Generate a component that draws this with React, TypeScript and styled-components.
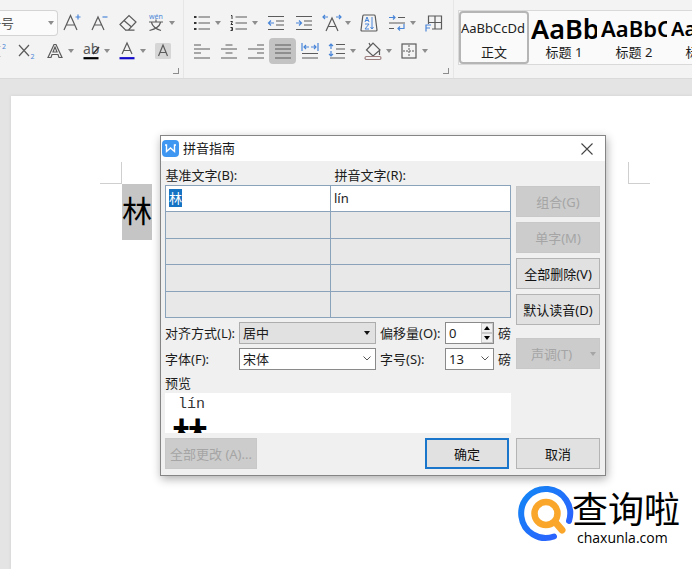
import React from "react";
import styled, { createGlobalStyle, css } from "styled-components";

const GlobalStyle = createGlobalStyle`
  * { box-sizing: border-box; }
  html, body { margin: 0; height: 100%; }
  body {
    font-family: "Noto Sans", "Noto Sans CJK SC", sans-serif;
    font-size: 13px;
    color: #1c1c1c;
    background: #e4e4e4;
    overflow: hidden;
  }
  button, input, select { font: inherit; color: inherit; margin: 0; }
`;

const Screen = styled.div`
  position: relative;
  display: flex;
  flex-direction: column;
  min-height: 100vh;
  overflow: hidden;
`;

/* ---------- ribbon ---------- */

const Ribbon = styled.header`
  display: flex;
  height: 79px;
  background: #f3f3f3;
  border-bottom: 1px solid #dadada;
  flex: none;
`;

const Group = styled.div<{ $inset?: number }>`
  position: relative;
  flex: none;
  display: flex;
  flex-direction: column;
  padding: 9px 5px 0 ${(p) => p.$inset ?? 0}px;
  border-right: 1px solid #e6e6e6;
`;

const ToolRow = styled.div<{ $pitch: number; $split: number; $shift?: number }>`
  display: flex;
  align-items: center;
  height: 28px;
  margin-left: ${(p) => p.$shift ?? 0}px;
  & > button { width: ${(p) => p.$pitch}px; }
  & > button[aria-haspopup] { width: ${(p) => p.$split}px; }
`;

const ToolButton = styled.button<{ $active?: boolean }>`
  flex: none;
  display: flex;
  align-items: center;
  gap: 3px;
  height: 26px;
  padding: 0 0 0 4px;
  border: 0;
  border-radius: 4px;
  background: ${(p) => (p.$active ? "#c3c3c3" : "transparent")};
  svg { flex: none; overflow: visible; }
`;

const SizeSelect = styled.div`
  display: grid;
  width: 58px;
  height: 26px;
  align-items: center;
  background: #fbfbfb;
  border: 1px solid #d4d4d4;
  border-left: 0;
  border-radius: 0 4px 4px 0;
  overflow: hidden;
  select {
    grid-area: 1 / 1;
    appearance: none;
    border: 0;
    margin-left: -12px;
    padding: 0;
    background: transparent;
    outline: none;
    color: #555;
  }
  svg { grid-area: 1 / 1; justify-self: end; margin-right: 3px; pointer-events: none; }
`;

const Launcher = styled.button`
  position: absolute;
  right: 4px;
  bottom: 4px;
  width: 6px;
  height: 6px;
  padding: 0;
  border: solid #8c8c8c;
  border-width: 0 1px 1px 0;
  background: none;
`;

const Gallery = styled.div`
  flex: 1;
  min-width: 0;
  display: flex;
  height: 55px;
  margin: 10px 0 0 4px;
  background: #fafafa;
  border: solid #d9d9d9;
  border-width: 1px 0 1px 1px;
  overflow: hidden;
`;

const StyleCard = styled.button<{ $selected?: boolean }>`
  flex: none;
  display: flex;
  flex-direction: column;
  align-items: center;
  width: 70px;
  height: 53px;
  padding: 0;
  background: transparent;
  border: 2px solid ${(p) => (p.$selected ? "#b5b5b5" : "transparent")};
  border-radius: 4px;
`;

const Sample = styled.span<{ $size: number; $bold?: boolean }>`
  width: 66px;
  height: 31px;
  line-height: 31px;
  overflow: hidden;
  white-space: nowrap;
  text-align: left;
  color: ${(p) => (p.$bold ? "#000" : "#222")};
  font-size: ${(p) => p.$size}px;
  font-weight: ${(p) => (p.$bold ? 600 : 400)};
`;

const StyleName = styled.span`
  line-height: 16px;
`;

/* ---------- document ---------- */

const Sheet = styled.main`
  flex: 1;
  margin: 17px 0 0 11px;
  padding: 66px 42px 0 89px;
  background: #fff;
  box-shadow: 0 0 3px #cfcfcf;
`;

const MarginMarks = styled.div`
  display: flex;
  justify-content: space-between;
`;

const Corner = styled.i<{ $side: "left" | "right" }>`
  width: 22px;
  height: 22px;
  border-bottom: 1px solid #cfcfcf;
  ${(p) =>
    p.$side === "left"
      ? css`border-right: 1px solid #cfcfcf;`
      : css`border-left: 1px solid #cfcfcf;`}
`;

const DocumentText = styled.p`
  margin: 0 0 0 22px;
  font-family: "Noto Sans CJK SC", sans-serif;
  font-size: 30px;
  line-height: 50px;
  color: #000;
  mark { display: inline-block; padding-bottom: 6px; background: #c5c5c5; color: #000; }
`;

/* ---------- dialog ---------- */

const Dialog = styled.section`
  position: absolute;
  left: 160px;
  top: 135px;
  width: 446px;
  background: #f0f0f0;
  border: 1px solid #858585;
  box-shadow: 1px 3px 9px rgba(0, 0, 0, 0.32);
`;

const TitleBar = styled.header`
  display: flex;
  align-items: center;
  gap: 4px;
  height: 25px;
  padding: 0 12px 0 1px;
  background: #fff;
  h1 { flex: 1; margin: 0; font-size: 13px; font-weight: 400; line-height: 25px; }
  button { display: flex; padding: 0; border: 0; background: none; }
`;

const Body = styled.form`
  display: grid;
  grid-template-columns: 1fr 84px;
  column-gap: 5px;
  padding: 4px 5px 6px 4px;
`;

const Main = styled.div`
  min-width: 0;
`;

const ReadingTable = styled.table`
  width: 100%;
  table-layout: fixed;
  border-collapse: collapse;
  th {
    height: 20px;
    padding: 0 0 0 4px;
    text-align: left;
    font-weight: 400;
    line-height: 18px;
  }
  th:first-child { width: 165px; padding-left: 0; }
  td {
    height: 26px;
    padding: 0 3px;
    line-height: 18px;
    border: 1px solid #8aa3ba;
    background: #e8e8e8;
  }
  tr:nth-child(even) td { height: 27px; }
  tr:first-child td { background: #fff; }
  mark { display: inline-block; background: #1673c4; color: #fff; }
`;

const Settings = styled.div`
  display: grid;
  grid-template-columns: 74px 137px 69px 49px 1fr;
  grid-auto-rows: 22px;
  row-gap: 4px;
  align-items: center;
  margin-top: 4px;
  white-space: nowrap;
  label:nth-of-type(2n) { padding-left: 4px; }
  & > span { padding-left: 4px; }
`;

const Field = styled.div<{ $flat?: boolean }>`
  display: grid;
  grid-template-columns: 1fr 16px;
  align-items: center;
  height: 22px;
  background: ${(p) => (p.$flat ? "#e1e1e1" : "#fff")};
  border: 1px solid ${(p) => (p.$flat ? "#adadad" : "#8a8a8a")};
  select, input {
    grid-area: 1 / 1 / 2 / 3;
    width: 100%;
    height: 20px;
    padding: 0 16px 0 3px;
    border: 0;
    outline: none;
    background: transparent;
    appearance: none;
  }
  input { appearance: textfield; }
  & > svg { grid-area: 1 / 2; pointer-events: none; justify-self: center; }
`;

const Stepper = styled.span`
  grid-area: 1 / 2;
  display: flex;
  flex-direction: column;
  width: 12px;
  justify-self: end;
  z-index: 1;
  button {
    display: flex;
    align-items: center;
    justify-content: center;
    height: 10px;
    padding: 0;
    border: 1px solid #c9c9c9;
    background: #f0f0f0;
  }
  svg { flex: none; }
`;

const PreviewLabel = styled.div`
  margin-top: 3px;
  line-height: 20px;
`;

const Preview = styled.output`
  display: block;
  height: 40px;
  padding-left: 7px;
  background: #fff;
  overflow: hidden;
  color: #000;
`;

const PreviewPinyin = styled.span`
  display: block;
  padding-left: 6px;
  font-family: "Liberation Mono", monospace;
  font-size: 15px;
  line-height: 24px;
  color: #333;
`;

const PreviewBase = styled.span`
  display: block;
  font-family: "Noto Sans CJK SC", sans-serif;
  font-size: 36px;
  font-weight: 700;
  line-height: 34px;
`;

const Side = styled.div`
  display: flex;
  flex-direction: column;
  gap: 5px;
  padding-top: 21px;
`;

const Button = styled.button<{ $primary?: boolean; $low?: boolean }>`
  display: flex;
  align-items: center;
  justify-content: center;
  height: 31px;
  width: 84px;
  padding: 0;
  white-space: nowrap;
  color: #111;
  background: #e1e1e1;
  border: ${(p) => (p.$primary ? "2px solid #1976ca" : "1px solid #b4b4b4")};
  ${(p) => p.$low && css`
    margin-top: 8px;
    justify-content: space-between;
    padding: 0 3px 0 14px;
  `}
  &:disabled { color: #a5a5a5; background: #cccccc; border-color: #c8c8c8; }
`;

const Footer = styled.div`
  grid-column: 1 / 3;
  display: flex;
  gap: 7px;
  margin-top: 5px;
  & > :first-child { width: 92px; margin-right: auto; }
`;

/* ---------- site mark ---------- */

const SiteMark = styled.aside`
  position: absolute;
  right: 0;
  bottom: 0;
  display: flex;
  width: 181px;
  height: 89px;
  padding: 4px 0 0 6px;
  background: #fff;
  color: #000;
  svg { flex: none; }
`;

const SiteText = styled.div`
  display: flex;
  flex-direction: column;
  margin-left: -3px;
  strong {
    font-family: "Noto Sans CJK SC", sans-serif;
    font-size: 36px;
    font-weight: 400;
    line-height: 46px;
  }
  span {
    padding-left: 5px;
    font-family: "Open Sans", sans-serif;
    font-size: 14px;
    font-weight: 500;
    line-height: 16px;
  }
`;

/* ---------- icons ---------- */

const DARK = "#5b5b5b";
const BLUE = "#4a86d8";

const Caret = ({ color = "#8d8d8d" }: { color?: string }) => (
  <svg width="6" height="4" viewBox="0 0 6 4"><path d="M0 0h6L3 4z" fill={color} /></svg>
);

const Icon = ({ children }: { children: React.ReactNode }) => (
  <svg width="20" height="20" viewBox="0 0 20 20" fill="none" stroke={DARK} strokeWidth="1.2">
    {children}
  </svg>
);

const Glyph = ({ x, y, size, fill = BLUE, children }: { x: number; y: number; size: number; fill?: string; children: string }) => (
  <text x={x} y={y} fontSize={size} fill={fill} stroke="none">{children}</text>
);

const icons = {
  grow: <Icon><path d="M2 17 8.500 2.500 15 17M4.500 12h8" /><path d="M13.500 4h5M16 1.500v5" stroke={BLUE} /></Icon>,
  shrink: <Icon><path d="M2 17 8 4l6 13M4.500 12h7" /><path d="M12.500 4h5" stroke={BLUE} /></Icon>,
  eraser: <Icon><path d="M2.500 11 11 2.500 18 9l-7.500 8H7.500L2 11.500zM6 7.500l7.500 6.500M7 17.200h9.500" /></Icon>,
  phonetic: <Icon><Glyph x={3} y={6} size={7}>wén</Glyph><path d="M3 9h14M10 6.500V9M5.500 9.500c1 4 4.500 6.500 9.500 8M14.500 9.500c-1 4-5 6.500-11 8" /></Icon>,
  superscript: <Icon><path d="m2 5 9 11M11 5 2 16" /><Glyph x={13} y={8} size={7}>2</Glyph></Icon>,
  subscript: <Icon><path d="m2 4 10 11M12 4 2 15" /><Glyph x={13.500} y={18} size={7}>2</Glyph></Icon>,
  effects: <Icon><path d="M3 16.500 9 3.500h2l6 13h-3l-1-3H7l-1 3zM8 11l2-5 2 5z" /></Icon>,
  highlight: <Icon><Glyph x={2} y={13} size={14} fill={DARK}>ab</Glyph><path d="m12 13 6-7" stroke="#333" strokeWidth="1.5" /><path d="M2.500 17.200h15" stroke="#000" strokeWidth="2.200" /></Icon>,
  fontColor: <Icon><path d="M5 13 10 2l5 11M6.500 9.500h7" /><path d="M2.500 17.200h15" stroke="#1209c9" strokeWidth="2.200" /></Icon>,
  shading: <Icon><rect x="2" y="2" width="16" height="16" rx="1.500" fill="#d6d6d6" stroke="none" /><path d="m5.500 15 4.500-11 4.500 11M7 11.500h6" /></Icon>,
  bullets: <Icon><path d="M6.500 4H18M6.500 10H18M6.500 16H18" /><path d="M2 4h2.500M2 10h2.500M2 16h2.500" stroke="#333" strokeWidth="2.200" /></Icon>,
  numbering: <Icon><path d="M6.500 4H18M6.500 10H18M6.500 16H18" /><path d="M2 2.500h1v3.500M1.500 8.500h2L2 11.500h2M1.500 14.500h2v3h-2M2 16h1.500" stroke="#333" strokeWidth="1" /></Icon>,
  outdent: <Icon><path d="M2 3.500h16M10 8h8M10 12h8M2 16.500h16" /><path d="M8 10H2.500M5 7.500 2.500 10 5 12.500" stroke={BLUE} /></Icon>,
  indent: <Icon><path d="M2 3.500h16M10 8h8M10 12h8M2 16.500h16" /><path d="M2 10h5.500M5 7.500 7.500 10 5 12.500" stroke={BLUE} /></Icon>,
  scaleText: <Icon><path d="M4 18 10 5l6 13M6 13.500h8" /><path d="M6 4H1M3 2 1 4l2 2M14 4h5M17 2l2 2-2 2" stroke={BLUE} /></Icon>,
  sort: <Icon><path d="M5 2h10q1 0 1.200 1L18 17q0 1-1 1H3q-1 0-1-1L3.800 3Q4 2 5 2z" /><path d="m6 9 2-5 2 5M6.500 7.500h3M6 11h4l-4 5h4M13 4v12M11.500 14l1.500 2 1.500-2" stroke={BLUE} strokeWidth="1" /></Icon>,
  lineBreak: <Icon><path d="M11 4.500h7M2 10h16M2 15.500h5" /><path d="M2 4.500h6M6 2.500l2 2-2 2M17 11v4.500h-6M13 13.500l-2 2 2 2" stroke={BLUE} /></Icon>,
  tableTool: <Icon><path d="M4.500 11V3h13v13H8M11 3v13M4.500 9.500h13" /><path d="M2 18.500V12h5M2 15h4" stroke={BLUE} /></Icon>,
  alignLeft: <Icon><path d="M2 4h7M2 8h16M2 12h7M2 17h16" /></Icon>,
  alignCenter: <Icon><path d="M6.500 4h7M2 8h16M6.500 12h7M2 17h16" /></Icon>,
  alignRight: <Icon><path d="M11 4h7M2 8h16M11 12h7M2 17h16" /></Icon>,
  justify: <Icon><path d="M2 4h16M2 8h16M2 12h16M2 17h16" /></Icon>,
  distribute: <Icon><path d="M2 12.500h16M2 17h16" /><path d="M2 2v8M18 2v8M9 6H4M6 4 4 6l2 2M11 6h5M14 4l2 2-2 2" stroke={BLUE} /></Icon>,
  lineSpacing: <Icon><path d="M9 3.500h9M9 8h9M9 12.500h9M3 17h15" /><path d="M4 8V3M2 5l2-2 2 2M4 10v5M2 13l2 2 2-2" stroke={BLUE} /></Icon>,
  bucket: <Icon><path d="m3.500 9 6.500-7 7 7-7 6zM16.500 8v6M7.500 5 6 2" /><rect x="2" y="15.500" width="16" height="3" rx="1.500" stroke="#9b7c7c" /></Icon>,
  borders: <Icon><rect x="3" y="3" width="14" height="14" /><path d="M10 4v12M4 10h12" strokeDasharray="2 1" strokeWidth="1" /></Icon>,
};

type Tool = [keyof typeof icons, string, ("menu" | "active")?];

const Tools = ({ items }: { items: Tool[] }) => (
  <>
    {items.map(([icon, label, kind]) => (
      <ToolButton key={icon} aria-label={label} aria-haspopup={kind === "menu" ? "menu" : undefined} $active={kind === "active"}>
        {icons[icon]}
        {kind === "menu" && <Caret />}
      </ToolButton>
    ))}
  </>
);

const Chevron = () => (
  <svg width="8" height="5" viewBox="0 0 8 5" fill="none" stroke="#555"><path d="m.5.5 3.500 3.500L7.500.5" /></svg>
);

export default function App() {
  return (
    <Screen>
      <GlobalStyle />
      <Ribbon>
        <Group>
          <ToolRow $pitch={28} $split={36}>
            <SizeSelect>
              <select aria-label="字号"><option>一号</option></select>
              <Caret />
            </SizeSelect>
            <Tools items={[["grow", "增大字号"], ["shrink", "减小字号"], ["eraser", "清除格式"], ["phonetic", "拼音指南", "menu"]]} />
          </ToolRow>
          <ToolRow $pitch={28} $split={36} $shift={-15}>
            <Tools items={[["superscript", "上标"], ["subscript", "下标"], ["effects", "文字效果", "menu"], ["highlight", "突出显示", "menu"], ["fontColor", "字体颜色", "menu"], ["shading", "字符底纹"]]} />
          </ToolRow>
          <Launcher aria-label="字体设置" />
        </Group>
        <Group $inset={4}>
          <ToolRow $pitch={28} $split={37}>
            <Tools items={[["bullets", "项目符号", "menu"], ["numbering", "编号", "menu"], ["outdent", "减少缩进量"], ["indent", "增加缩进量"], ["scaleText", "字符缩放", "menu"], ["sort", "排序"], ["lineBreak", "换行", "menu"], ["tableTool", "制表位"]]} />
          </ToolRow>
          <ToolRow $pitch={27} $split={36}>
            <Tools items={[["alignLeft", "左对齐"], ["alignCenter", "居中对齐"], ["alignRight", "右对齐"], ["justify", "两端对齐", "active"], ["distribute", "分散对齐"], ["lineSpacing", "行距", "menu"], ["bucket", "底纹颜色", "menu"], ["borders", "边框", "menu"]]} />
          </ToolRow>
          <Launcher aria-label="段落设置" />
        </Group>
        <Gallery>
          <StyleCard $selected><Sample $size={13}>AaBbCcDd</Sample><StyleName>正文</StyleName></StyleCard>
          <StyleCard><Sample $size={27} $bold>AaBb</Sample><StyleName>标题 1</StyleName></StyleCard>
          <StyleCard><Sample $size={22} $bold>AaBbC</Sample><StyleName>标题 2</StyleName></StyleCard>
          <StyleCard><Sample $size={20} $bold>AaBbC</Sample><StyleName>标题 3</StyleName></StyleCard>
        </Gallery>
      </Ribbon>

      <Sheet>
        <MarginMarks><Corner $side="left" /><Corner $side="right" /></MarginMarks>
        <DocumentText><mark>林</mark></DocumentText>
      </Sheet>

      <SiteMark>
        <svg width="58" height="58" viewBox="0 0 58 58" fill="none" strokeLinecap="round">
          <defs>
            <linearGradient id="ring" x1="0" y1="0" x2="1" y2="1">
              <stop offset="0" stopColor="#1287f5" />
              <stop offset="1" stopColor="#2f5cff" />
            </linearGradient>
          </defs>
          <path d="M37 52.500A24.500 24.500 0 1 1 52 37" stroke="url(#ring)" strokeWidth="6" />
          <circle cx="29" cy="29.500" r="11.500" stroke="#f9a62b" strokeWidth="6.500" />
          <path d="m39 39 6 7" stroke="#f9a62b" strokeWidth="7" />
        </svg>
        <SiteText><strong>查询啦</strong><span>chaxunla.com</span></SiteText>
      </SiteMark>

      <Dialog role="dialog" aria-labelledby="dialog-title">
        <TitleBar>
          <svg width="17" height="17" viewBox="0 0 17 17">
            <rect width="17" height="17" rx="4" fill="#3f97f2" />
            <path d="M3 5h1.500v6.500L8.500 8l4 3.500V5H14" fill="none" stroke="#fff" strokeWidth="1.400" />
          </svg>
          <h1 id="dialog-title">拼音指南</h1>
          <button aria-label="关闭">
            <svg width="12" height="12" viewBox="0 0 12 12" stroke="#444" strokeWidth="1.100"><path d="m.5.5 11 11M11.500.5l-11 11" /></svg>
          </button>
        </TitleBar>
        <Body onSubmit={(e) => e.preventDefault()}>
          <Main>
            <ReadingTable>
              <thead><tr><th>基准文字(B):</th><th>拼音文字(R):</th></tr></thead>
              <tbody>
                <tr><td><mark>林</mark></td><td>lín</td></tr>
                {[1, 2, 3, 4].map((n) => <tr key={n}><td /><td /></tr>)}
              </tbody>
            </ReadingTable>
            <Settings>
              <label htmlFor="align">对齐方式(L):</label>
              <Field $flat><select id="align"><option>居中</option></select><Caret color="#111" /></Field>
              <label htmlFor="offset">偏移量(O):</label>
              <Field>
                <input id="offset" type="number" defaultValue={0} />
                <Stepper>
                  <button type="button" aria-label="增加"><svg width="6" height="4"><path d="M0 4h6L3 0z" /></svg></button>
                  <button type="button" aria-label="减少"><svg width="6" height="4"><path d="M0 0h6L3 4z" /></svg></button>
                </Stepper>
              </Field>
              <span>磅</span>
              <label htmlFor="font">字体(F):</label>
              <Field><select id="font"><option>宋体</option></select><Chevron /></Field>
              <label htmlFor="size">字号(S):</label>
              <Field><select id="size"><option>13</option></select><Chevron /></Field>
              <span>磅</span>
            </Settings>
            <PreviewLabel>预览</PreviewLabel>
            <Preview><PreviewPinyin>lín</PreviewPinyin><PreviewBase>林</PreviewBase></Preview>
          </Main>
          <Side>
            <Button type="button" disabled>组合(G)</Button>
            <Button type="button" disabled>单字(M)</Button>
            <Button type="button">全部删除(V)</Button>
            <Button type="button">默认读音(D)</Button>
            <Button type="button" disabled $low>声调(T)<Caret color="#a5a5a5" /></Button>
          </Side>
          <Footer>
            <Button type="button" disabled>全部更改 (A)...</Button>
            <Button type="submit" $primary>确定</Button>
            <Button type="button">取消</Button>
          </Footer>
        </Body>
      </Dialog>
    </Screen>
  );
}
